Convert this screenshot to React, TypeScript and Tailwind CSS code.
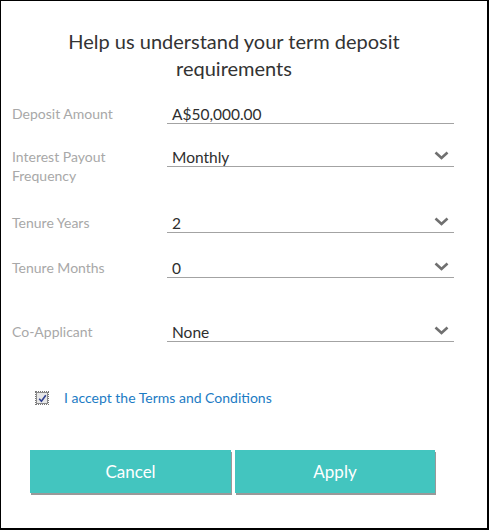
import React from "react";

const fields = [
  { label: "Deposit Amount", value: "A$50,000.00", select: false, mt: "mt-[21px]" },
  { label: "Interest Payout Frequency", value: "Monthly", select: true, mt: "mt-[22px]" },
  { label: "Tenure Years", value: "2", select: true, mt: "mt-[27px]" },
  { label: "Tenure Months", value: "0", select: true, mt: "mt-[24px]" },
  { label: "Co-Applicant", value: "None", select: true, mt: "mt-[43px]" },
];

function Chevron() {
  return (
    <svg width="15" height="9" viewBox="0 0 15 9" className="shrink-0">
      <path d="M1.5 1.5 L7.5 7 L13.5 1.5" fill="none" stroke="#707070" strokeWidth="2.6" />
    </svg>
  );
}

export default function App() {
  return (
    <div
      className="w-[489px] h-[530px] bg-white border-l border-t border-r-2 border-b-2 border-black flex flex-col"
      style={{ fontFamily: "Lato, 'Open Sans', sans-serif" }}
    >
      {/* Heading */}
      <h1 className="pt-[27px] pr-[20px] text-center text-[20px] leading-[27px] text-[#333]">
        Help us understand your term deposit
        <br />
        requirements
      </h1>

      {/* Form rows */}
      <div className="flex flex-col">
        {fields.map((f) => (
          <div key={f.label} className={`flex items-start pl-[11px] ${f.mt}`}>
            <label className="w-[155px] pt-[1px] pr-4 text-[14px] leading-[19px] text-[#a8a8a8]">
              {f.label.startsWith("Interest") ? (
                <>
                  Interest Payout
                  <br />
                  Frequency
                </>
              ) : (
                f.label
              )}
            </label>
            <div className="w-[287px] h-[21px] border-b border-[#a3a3a3] flex items-start justify-between pl-[5px] pr-[5px]">
              <span className="pt-[2px] text-[15.5px] leading-[18px] text-[#2e2e2e]">{f.value}</span>
              {f.select && (
                <span className="pt-[5px]">
                  <Chevron />
                </span>
              )}
            </div>
          </div>
        ))}
      </div>

      {/* Terms checkbox */}
      <div className="flex items-center mt-[47px] pl-[34px]">
        <div className="w-[14px] h-[14px] border border-dotted border-[#777] flex items-center justify-center">
          <div className="w-[12px] h-[12px] border border-[#8a8a8a] bg-[#e8e8e8] flex items-center justify-center">
            <svg width="9" height="9" viewBox="0 0 9 9">
              <path d="M1.2 4.8 L3.4 7.2 L7.8 1.2" fill="none" stroke="#2f3f8f" strokeWidth="1.6" />
            </svg>
          </div>
        </div>
        <span className="ml-[15px] text-[14px] leading-[18px] text-[#1b7bc4]">I accept the Terms and Conditions</span>
      </div>

      {/* Actions */}
      <div className="flex gap-[4px] pl-[29px] mt-[43px]">
        <button className="w-[201px] h-[43px] bg-[#43c5bf] text-white text-[17px] shadow-[1px_2px_0_rgba(0,0,0,0.4)]">
          Cancel
        </button>
        <button className="w-[200px] h-[43px] bg-[#43c5bf] text-white text-[17px] shadow-[1px_2px_0_rgba(0,0,0,0.4)]">
          Apply
        </button>
      </div>
    </div>
  );
}
